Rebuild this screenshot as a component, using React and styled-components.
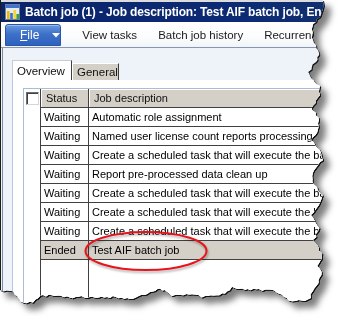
import React from 'react'
import styled, { createGlobalStyle } from 'styled-components'

const GlobalStyle = createGlobalStyle`
  html, body {
    margin: 0;
    padding: 0;
    background: #ffffff;
  }
  body {
    width: 344px;
    height: 316px;
    overflow: hidden;
    font-family: "Liberation Sans", Arial, sans-serif;
  }
`

// torn paper edge: key points, then filled in with a small seeded jitter
const rightEdge = [
    [323, 0], [324, 8], [320, 17], [313, 24], [312, 32], [313, 40], [317, 48], [320, 55],
    [315, 62], [309, 72], [311, 78], [319, 86], [320, 95], [312, 108], [319, 120], [318, 130],
    [312, 140], [320, 150], [322, 160], [312, 173], [313, 182], [322, 195], [318, 205],
    [312, 215], [319, 228], [314, 240], [319, 248], [322, 256], [318, 266], [322, 275],
    [318, 283], [312, 291], [310, 298], [305, 302],
]
const bottomEdge = [
    [289, 300], [272, 290], [259, 290], [245, 290], [232, 288], [225, 293], [205, 297],
    [192, 295], [172, 295], [160, 288], [150, 292], [133, 298], [110, 297], [90, 297],
    [67, 297], [43, 295], [33, 302], [23, 303], [13, 292], [0, 290],
]

const makeClip = () => {
    let seed = 7
    const rand = () => {
        seed = (seed * 9301 + 49297) % 233280
        return seed / 233280 - 0.5
    }
    const pts = [...rightEdge, ...bottomEdge]
    const out = []
    for (let i = 0; i < pts.length - 1; i++) {
        const [x1, y1] = pts[i]
        const [x2, y2] = pts[i + 1]
        const steps = Math.max(1, Math.round(Math.hypot(x2 - x1, y2 - y1) / 3))
        for (let s = 0; s < steps; s++) {
            const t = s / steps
            const jitter = i === 0 && s === 0 ? 0 : rand() * 2.4
            const vertical = i < rightEdge.length - 1
            const x = x1 + (x2 - x1) * t + (vertical ? jitter : 0)
            const y = y1 + (y2 - y1) * t + (vertical ? 0 : jitter)
            out.push(`${x.toFixed(1)}px ${y.toFixed(1)}px`)
        }
    }
    out.push('0px 290px', '0px 0px')
    return `polygon(${out.join(', ')})`
}

const clip = makeClip()

const jobs = [
    { status: 'Waiting', text: 'Automatic role assignment' },
    { status: 'Waiting', text: 'Named user license count reports processing' },
    { status: 'Waiting', text: 'Create a scheduled task that will execute the batch job' },
    { status: 'Waiting', text: 'Report pre-processed data clean up' },
    { status: 'Waiting', text: 'Create a scheduled task that will execute the batch job' },
    { status: 'Waiting', text: 'Create a scheduled task that will execute the batch job' },
    { status: 'Waiting', text: 'Create a scheduled task that will execute the batch job' },
    { status: 'Ended', text: 'Test AIF batch job', selected: true },
]

const App = () => {
    return (
        <Stage>
            <GlobalStyle />
            <Shadow>
                <Window $clip={clip}>
                    <TitleBar>
                        <AppIcon />
                        <Title>Batch job (1) - Job description: Test AIF batch job, Ended</Title>
                    </TitleBar>
                    <Ribbon>
                        <FileButton>
                            <span><u>F</u>ile</span>
                            <Caret />
                        </FileButton>
                        <RibbonItem>View tasks</RibbonItem>
                        <RibbonItem>Batch job history</RibbonItem>
                        <RibbonItem>Recurrence</RibbonItem>
                    </Ribbon>
                    <Body>
                        <Inner>
                            <Tabs>
                                <Tab $active>Overview</Tab>
                                <Tab>General</Tab>
                            </Tabs>
                            <Panel>
                                <Grid>
                                    <HeadRow>
                                        <CheckCell><CheckBox /></CheckCell>
                                        <HeadCell>Status</HeadCell>
                                        <HeadCell>Job description</HeadCell>
                                    </HeadRow>
                                    {jobs.map((job, i) => (
                                        <Row key={i}>
                                            <CheckCell />
                                            <Cell $selected={job.selected}>{job.status}</Cell>
                                            <Cell $selected={job.selected}>{job.text}</Cell>
                                        </Row>
                                    ))}
                                    <Filler>
                                        <CheckCell />
                                        <EmptyCell />
                                        <EmptyCell />
                                    </Filler>
                                </Grid>
                            </Panel>
                        </Inner>
                    </Body>
                    <Mark width="130" height="46" viewBox="0 0 130 46">
                        <ellipse cx="64" cy="22" rx="60.5" ry="19" fill="none" stroke="#e8141c" strokeWidth="2" />
                    </Mark>
                </Window>
            </Shadow>
        </Stage>
    )
}

const AppIcon = () => (
    <IconSvg width="18" height="18" viewBox="0 0 18 18">
        <rect x="1.5" y="1.5" width="14" height="15" fill="#e6e9ee" stroke="#6c7c98" />
        <rect x="2" y="2" width="13" height="3" fill="#3f72d2" />
        <rect x="3" y="8" width="2.6" height="8" fill="#f0b800" />
        <rect x="6.2" y="10" width="2.6" height="6" fill="#2f6fe0" />
        <rect x="9.4" y="7" width="2.6" height="9" fill="#f5d530" />
        <rect x="12.4" y="11" width="2.6" height="5" fill="#3aa23a" />
    </IconSvg>
)

const Caret = () => (
    <svg width="8" height="5" viewBox="0 0 8 5">
        <path d="M0 0 H8 L4 4.5 Z" fill="#ffffff" />
    </svg>
)

const Stage = styled.div`
    position: relative;
    width: 344px;
    height: 316px;
    overflow: hidden;
`

const Shadow = styled.div`
    width: 330px;
    height: 306px;
    filter: drop-shadow(1px 1px 0 #111) drop-shadow(6px 6px 3px rgba(0, 0, 0, 0.5));
`

const Window = styled.div`
    position: relative;
    width: 100%;
    height: 100%;
    display: flex;
    flex-direction: column;
    background: #eef3fa;
    border-left: 1px solid #1c1c1c;
    box-sizing: border-box;
    clip-path: ${p => p.$clip};
    overflow: hidden;
`

const TitleBar = styled.div`
    height: 20px;
    border-top: 2px solid #dcdcdc;
    background: linear-gradient(90deg, #0a246a 0%, #0c2a74 70%, #10306f 100%);
    display: flex;
    align-items: center;
    gap: 3px;
    padding-left: 3px;
    white-space: nowrap;
    flex-shrink: 0;
`

const IconSvg = styled.svg`
    flex-shrink: 0;
`

const Title = styled.span`
    color: #ffffff;
    font-weight: bold;
    font-size: 12px;
    letter-spacing: -0.15px;
`

const Ribbon = styled.div`
    height: 25px;
    display: flex;
    align-items: center;
    padding-left: 4px;
    background: linear-gradient(180deg, #ffffff 0%, #fbfcfd 60%, #f1f4f8 100%);
    border-bottom: 1px solid #8797b0;
    white-space: nowrap;
    flex-shrink: 0;
`

const FileButton = styled.div`
    width: 60px;
    height: 22px;
    box-sizing: border-box;
    margin-top: 1px;
    border: 1px solid #2a55a6;
    border-radius: 3px 3px 0 0;
    background: linear-gradient(180deg, #6a9ae0 0%, #3d70c8 45%, #2f62bd 100%);
    box-shadow: inset 0 1px 0 rgba(255, 255, 255, 0.35);
    display: flex;
    align-items: center;
    gap: 13px;
    padding-left: 14px;
    color: #ffffff;
    font-size: 12px;
    margin-right: 11px;
`

const RibbonItem = styled.div`
    padding: 0 11px 0 10px;
    font-size: 11.5px;
    color: #1a1a1a;
`

const Body = styled.div`
    flex: 1;
    display: flex;
    padding-left: 1px;
    min-height: 0;
`

const Inner = styled.div`
    flex: 1;
    display: flex;
    flex-direction: column;
    border-left: 1px solid #7d8ba0;
    padding: 12px 0 0 9px;
    min-width: 0;
`

const Tabs = styled.div`
    display: flex;
    align-items: flex-end;
    height: 20px;
    flex-shrink: 0;
`

const Tab = styled.div`
    height: ${p => (p.$active ? '20px' : '17px')};
    box-sizing: border-box;
    padding: 0 4px;
    display: flex;
    align-items: center;
    font-size: 11.5px;
    color: #111;
    background: ${p => (p.$active ? '#ffffff' : '#d4d0c8')};
    border-top: 1px solid ${p => (p.$active ? '#c8ccd2' : '#ffffff')};
    border-left: 1px solid ${p => (p.$active ? '#c8ccd2' : '#ffffff')};
    border-right: 1px solid #404040;
    width: ${p => (p.$active ? '60px' : '47px')};
`

const Panel = styled.div`
    flex: 1;
    display: flex;
    background: #ffffff;
    border-left: 1px solid #b7c8de;
    padding: 8px 0 0 10px;
    min-height: 0;
`

const Grid = styled.div`
    flex: 1;
    display: flex;
    flex-direction: column;
    border-top: 1px solid #a9bdd6;
    border-left: 1px solid #a9bdd6;
    min-width: 0;
`

const cols = `
    display: grid;
    grid-template-columns: 16px 48px 1fr;
    white-space: nowrap;
`

const HeadRow = styled.div`
    ${cols}
    height: 19px;
    box-sizing: border-box;
`

const Row = styled.div`
    ${cols}
    height: 19px;
`

const Filler = styled.div`
    ${cols}
    flex: 1;
`

const CheckCell = styled.div`
    background: #ffffff;
    display: flex;
    align-items: center;
    padding-left: 2px;
`

const CheckBox = styled.div`
    width: 13px;
    height: 13px;
    box-sizing: border-box;
    background: #ffffff;
    border-top: 1px solid #6e6e6e;
    border-left: 1px solid #6e6e6e;
    border-right: 1px solid #d6d6d6;
    border-bottom: 1px solid #d6d6d6;
    box-shadow: inset 1px 1px 0 #404040;
`

const HeadCell = styled.div`
    background: #d4d0c8;
    border-left: 1px solid #404040;
    border-bottom: 1px solid #404040;
    box-shadow: inset 1px 1px 0 #ffffff;
    font-size: 11px;
    color: #111;
    line-height: 18px;
    padding-left: 5px;
    overflow: hidden;
`

const Cell = styled.div`
    background: ${p => (p.$selected ? '#d4d0c8' : '#ffffff')};
    border-left: 1px solid #404040;
    border-bottom: 1px solid #404040;
    font-size: 11px;
    color: #000;
    line-height: 18px;
    padding-left: 3px;
    overflow: hidden;
`

const EmptyCell = styled.div`
    background: #ffffff;
    border-left: 1px solid #404040;
`

const Mark = styled.svg`
    position: absolute;
    left: 81px;
    top: 229px;
    filter: drop-shadow(1px 2px 1px rgba(0, 0, 0, 0.3));
`

export default App
